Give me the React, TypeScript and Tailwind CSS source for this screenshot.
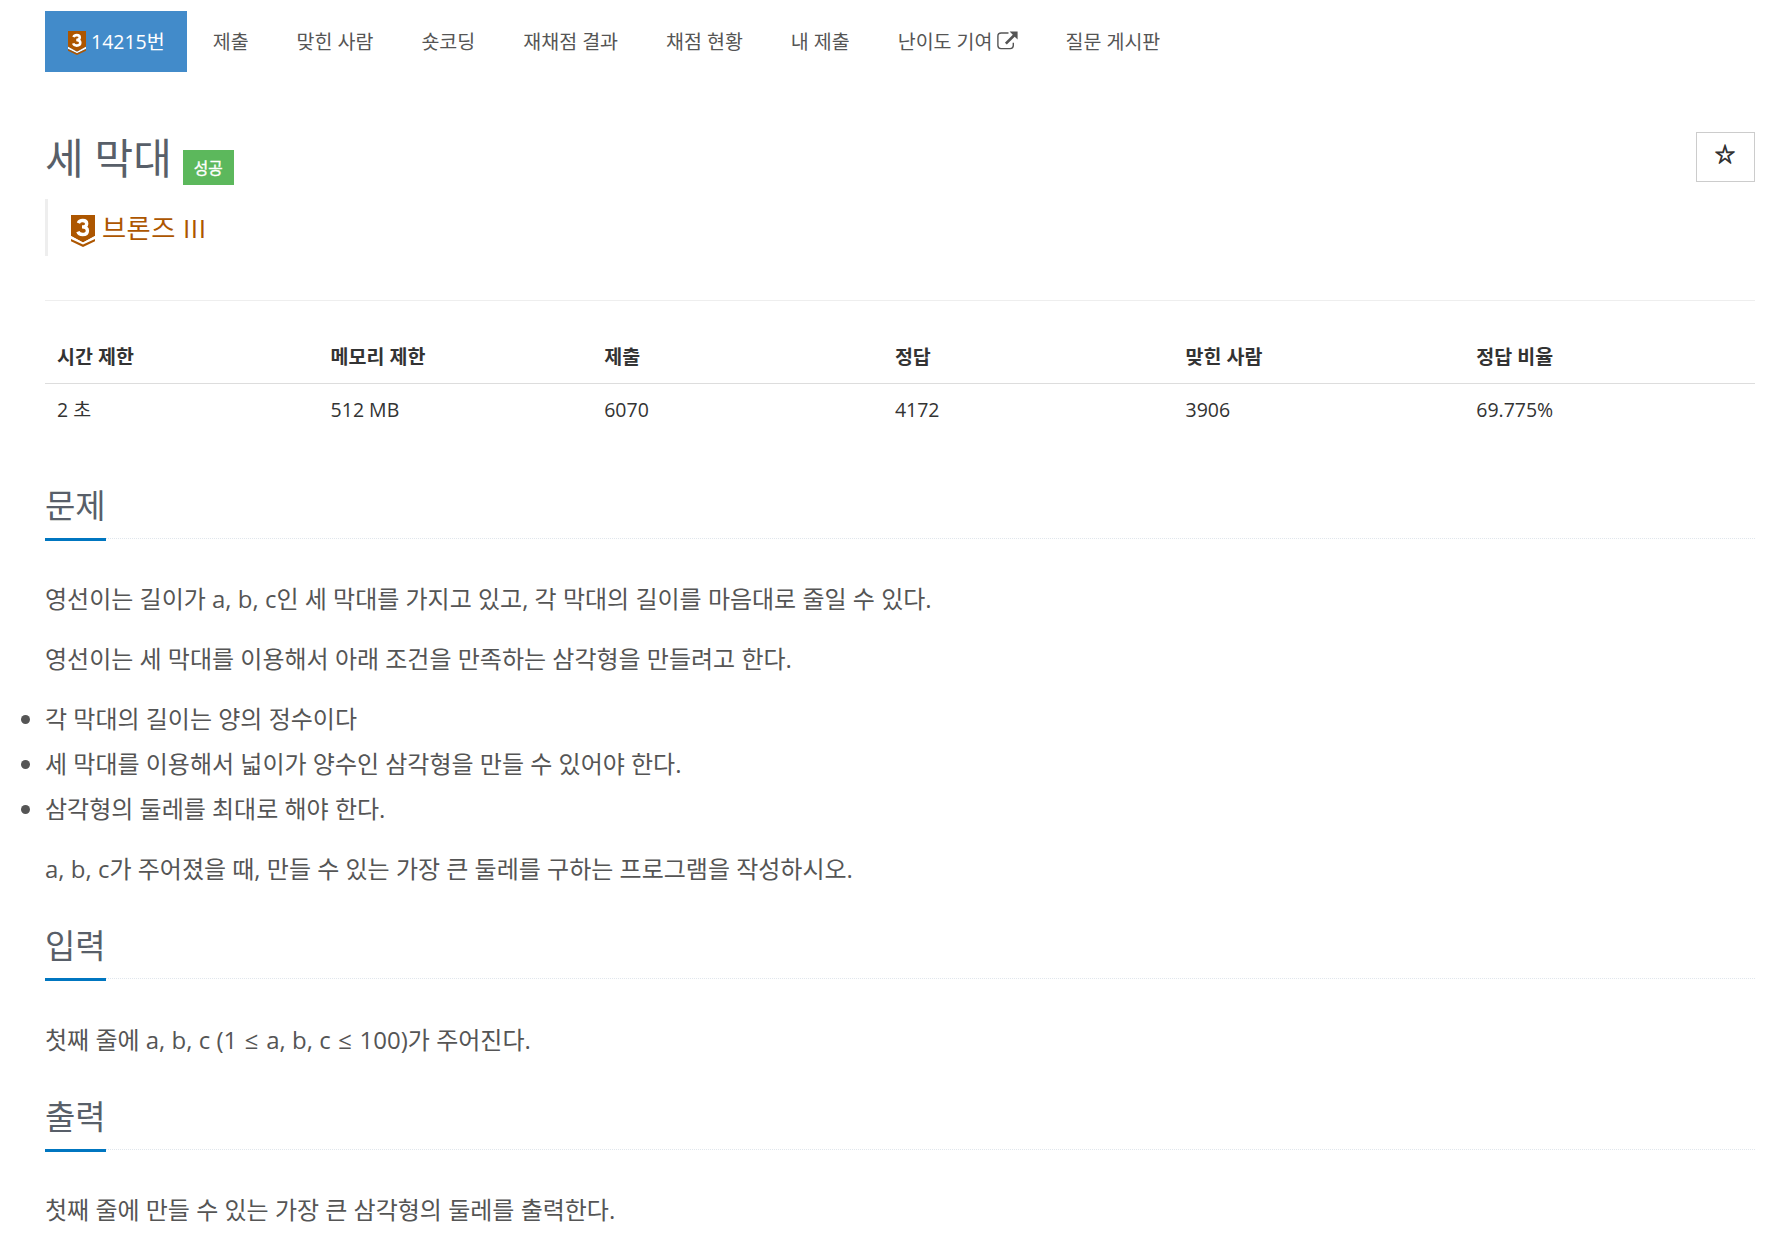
import React from "react";

type TierIconProps = {
  className?: string;
};

type SectionProps = {
  title: string;
  children: React.ReactNode;
};

const TABS = ["제출", "맞힌 사람", "숏코딩", "재채점 결과", "채점 현황", "내 제출", "난이도 기여", "질문 게시판"];

const INFO = [
  { label: "시간 제한", value: "2 초", width: "w-[16%]" },
  { label: "메모리 제한", value: "512 MB", width: "w-[16%]" },
  { label: "제출", value: "6070", width: "w-[17%]" },
  { label: "정답", value: "4172", width: "w-[17%]" },
  { label: "맞힌 사람", value: "3906", width: "w-[17%]" },
  { label: "정답 비율", value: "69.775%", width: "w-[17%]" },
];

const TierIcon = ({ className }: TierIconProps) => (
  <svg viewBox="0 0 24 32" className={className}>
    <path d="M0 0h24v21l-12 6.5L0 21z" fill="#ad5600" />
    <path d="M0 21l12 6.5L24 21v2.8l-12 6L0 23.8z" fill="#fff" />
    <path d="M0 24l12 5.6L24 24v2.2L12 32 0 26.2z" fill="#ad5600" />
    <path
      d="M7.4 8.1C8 6.4 9.6 5.5 11.7 5.5c2.5 0 4 1.2 4 3.2 0 2.1-1.7 3.2-4.7 3.2 3.4 0 5.4 1.3 5.4 3.8 0 2.4-1.9 3.8-4.8 3.8-2.3 0-4-.9-4.7-2.9"
      fill="none"
      stroke="#fff"
      strokeWidth="3.4"
    />
  </svg>
);

const ExternalLinkIcon = () => (
  <svg viewBox="0 0 21 20" className="-mt-px ml-1 h-5 w-[21px] self-center" fill="none">
    <path d="M11.5 2H4.2C2.2 2 .9 3.2.9 5v9.6c0 1.8 1.3 3 3.1 3h9.2c1.8 0 3.1-1.2 3.1-3V11.8" stroke="#555" strokeWidth="1.4" />
    <path d="M12.6.6h8v8l-2.9-2.9-7.9 7.9-1.9-1.9 7.9-7.9z" fill="#555" />
  </svg>
);

const Section = ({ title, children }: SectionProps) => (
  <section className="mb-[27.5px]">
    <div className="mb-[36.5px] flex h-[61px] border-b border-dotted border-[#e0e6ec]">
      <h2 className="-mb-[3px] h-[63px] border-b-[3px] border-[#0076c0] text-[33px] leading-[56px] text-[#585f69]">
        {title}
      </h2>
    </div>
    <div className="space-y-[15px] text-[24px] leading-[45px] text-[#555]">{children}</div>
  </section>
);

const App = () => {
  return (
    <div className="h-[1238px] overflow-hidden bg-white pr-4 pl-[45px] pt-[11px] font-['Open_Sans','Noto_Sans_CJK_KR',sans-serif] text-[#333]">
      <nav className="flex gap-[3px] text-[19.5px] leading-[61px] text-[#555]">
        <a className="flex h-[61px] items-center bg-[#428bca] px-[22.5px] text-white">
          <TierIcon className="mr-[5.5px] mt-[3px] h-6 w-[18px]" />
          14215번
        </a>
        {TABS.map((tab) => (
          <a key={tab} className="flex h-[61px] px-[22.5px]">
            {tab}
            {tab === "난이도 기여" && <ExternalLinkIcon />}
          </a>
        ))}
      </nav>

      <header className="mt-[60px] h-[169px] border-b border-[#eee]">
        <div className="flex h-[67px] items-start">
          <h1 className="text-[42px] leading-[52px] text-[#585f69]">세 막대</h1>
          <span className="ml-[11px] mt-[18px] h-[35px] bg-[#5cb85c] px-[11px] text-[15.75px] leading-[36px] text-white [-webkit-text-stroke:0.35px_white]">
            성공
          </span>
          <button className="ml-auto h-[50px] w-[59px] border border-[#ccc] pb-1 pr-px text-[20px] leading-[42px] [-webkit-text-stroke:0.9px_#333]">
            ☆
          </button>
        </div>
        <blockquote className="flex h-[57px] items-center border-l-[3px] border-[#eee] pl-[23px] text-[26.25px] text-[#ad5600]">
          <TierIcon className="mr-[7px] mt-[6px] h-8 w-6" />
          <span className="mt-0.5 tracking-[0.45px]">브론즈 III</span>
        </blockquote>
      </header>

      <table className="mt-[30px] w-full table-fixed text-left text-[19.5px]">
        <thead>
          <tr className="h-[52px] border-b border-[#ddd]">
            {INFO.map(({ label, width }) => (
              <th key={label} className={`${width} px-3 font-bold`}>
                {label}
              </th>
            ))}
          </tr>
        </thead>
        <tbody>
          <tr className="h-[53px]">
            {INFO.map(({ label, value }) => (
              <td key={label} className="px-3">
                {value}
              </td>
            ))}
          </tr>
        </tbody>
      </table>

      <main className="mt-[42px]">
        <Section title="문제">
          <p>영선이는 길이가 a, b, c인 세 막대를 가지고 있고, 각 막대의 길이를 마음대로 줄일 수 있다.</p>
          <p>영선이는 세 막대를 이용해서 아래 조건을 만족하는 삼각형을 만들려고 한다.</p>
          <ul className="list-disc">
            <li>각 막대의 길이는 양의 정수이다</li>
            <li>세 막대를 이용해서 넓이가 양수인 삼각형을 만들 수 있어야 한다.</li>
            <li>삼각형의 둘레를 최대로 해야 한다.</li>
          </ul>
          <p>a, b, c가 주어졌을 때, 만들 수 있는 가장 큰 둘레를 구하는 프로그램을 작성하시오.</p>
        </Section>
        <Section title="입력">
          <p className="pt-px">
            첫째 줄에 a, b, c (1 <span className="mx-[1.4px]">≤</span> a, b, c <span className="mx-[1.4px]">≤</span> 100)가 주어진다.
          </p>
        </Section>
        <Section title="출력">
          <p>첫째 줄에 만들 수 있는 가장 큰 삼각형의 둘레를 출력한다.</p>
        </Section>
      </main>
    </div>
  );
};

export default App;
